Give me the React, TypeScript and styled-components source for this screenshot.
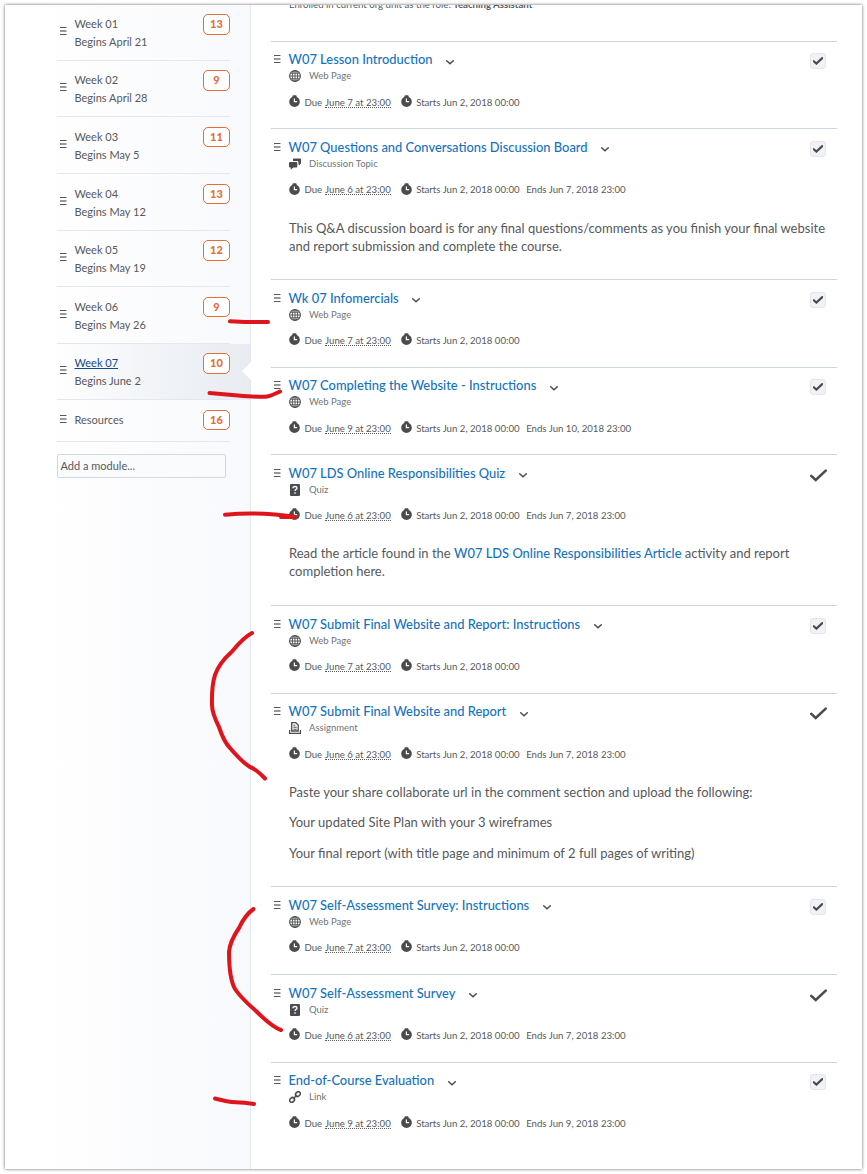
import React from "react";
import styled, { createGlobalStyle } from "styled-components";

const GlobalStyle = createGlobalStyle`
  * { box-sizing: border-box; }
  body {
    margin: 0;
    background: #fff;
    color: #56595b;
    font-family: Lato, "Liberation Sans", sans-serif;
  }
  p { margin: 0; }
`;

const Page = styled.div`
  position: relative;
  width: 867px;
  height: 1174px;
  padding: 5px;
  overflow: hidden;
`;

const Frame = styled.div`
  display: flex;
  width: 857px;
  height: 1164px;
  background: #fff;
  box-shadow: 0 0 3px rgba(0, 0, 0, 0.62);
  overflow: hidden;
`;

const Sidebar = styled.aside`
  width: 246px;
  flex: none;
  border-right: 1px solid #e3e9f1;
  background: linear-gradient(to right, #fff 35px, #f8f9fc 100%);
`;

const Module = styled.div<{ $height: number; $active?: boolean }>`
  position: relative;
  display: flex;
  align-items: flex-start;
  height: ${(p) => p.$height}px;
  padding: 10.1px 20px 0 52px;
  background: ${(p) =>
    p.$active ? "linear-gradient(to right, rgba(232,236,241,0) 52px, #e8ecf1 100%)" : "none"};
  &::after {
    content: "";
    position: absolute;
    left: 52px;
    right: 20px;
    bottom: 0;
    height: 1px;
    background: #e3e7ef;
  }
`;

const ModuleHandle = styled.span<{ $single?: boolean }>`
  display: flex;
  width: 17.5px;
  padding: ${(p) => (p.$single ? 4 : 12)}px 0 0 3px;
`;

const ModuleText = styled.div`
  flex: 1;
  font-size: 11px;
  line-height: 18px;
`;

const ModuleName = styled.div<{ $active?: boolean }>`
  color: ${(p) => (p.$active ? "#14498c" : "inherit")};
  text-decoration: ${(p) => (p.$active ? "underline" : "none")};
`;

const Count = styled.span`
  width: 27px;
  height: 20.5px;
  border: 1px solid #e06f38;
  border-radius: 5px;
  background: #fff;
  color: #e0703a;
  font-size: 11px;
  font-weight: 900;
  line-height: 18.5px;
  text-align: center;
  margin-top: -1px;
`;

const Notch = styled.span`
  position: absolute;
  right: -1px;
  top: 18px;
  border: solid transparent;
  border-width: 9.5px 9px 9.5px 0;
  border-right-color: #fff;
`;

const AddModule = styled.div`
  width: 169px;
  height: 24px;
  margin: 12px 0 0 52px;
  padding-left: 2.5px;
  border: 1px solid #d0d9e4;
  border-radius: 2px;
  background: #fafbfd;
  font-size: 11px;
  line-height: 21px;
`;

const Content = styled.main`
  flex: 1;
  padding: 0 25px 0 20px;
`;

const Notice = styled.div`
  height: 36px;
  padding-left: 18px;
  font-size: 9.63px;
  line-height: 12px;
  white-space: nowrap;
  overflow: hidden;
  span {
    display: block;
    margin-top: -7px;
  }
`;

const Topic = styled.section<{ $height: number }>`
  display: grid;
  grid-template-columns: 18px 1fr 27px;
  align-content: start;
  height: ${(p) => p.$height}px;
  border-top: 1px solid #cdd5e3;
`;

const TopicHandle = styled.span`
  display: flex;
  padding: 13.4px 0 0 2.5px;
`;

const TopicBody = styled.div`
  min-width: 0;
`;

const TitleRow = styled.div`
  display: flex;
  align-items: center;
  height: 18px;
  margin-top: 8.3px;
  white-space: nowrap;
`;

const TitleLink = styled.span`
  margin-left: -0.5px;
  color: #1573bd;
  font-size: 12.9px;
  font-weight: 500;
  line-height: 18px;
`;

const Chevron = styled.svg`
  margin: 6px 0 0 13.5px;
`;

const KindRow = styled.div`
  display: flex;
  align-items: center;
  height: 14px;
  margin-top: 1.2px;
  color: #727577;
  font-size: 9.5px;
  line-height: 14px;
  svg { margin-right: 8px; }
`;

const DateRow = styled.div`
  display: flex;
  align-items: center;
  height: 14px;
  margin-top: 11.1px;
  font-size: 9.64px;
  line-height: 14px;
  white-space: nowrap;
`;

const Clock = styled.svg`
  margin: -1px 4.4px 0 0;
`;

const DueDate = styled.span`
  margin: 0 10px 0 3px;
  height: 12px;
  line-height: 12px;
  border-bottom: 1px dotted #56595b;
`;

const EndDate = styled.span`
  margin-left: 6.6px;
`;

const Description = styled.div<{ $gap: number }>`
  display: flex;
  flex-direction: column;
  gap: ${(p) => p.$gap}px;
  margin-top: 22.5px;
  font-size: 13px;
  line-height: 18px;
  white-space: nowrap;
  a { color: #1573bd; font-size: 12.9px; font-weight: 500; }
`;

const CheckBox = styled.span`
  display: flex;
  align-items: center;
  justify-content: center;
  width: 16px;
  height: 16px;
  margin-top: 11.4px;
  padding-right: 1px;
  border: 1px solid #e1e5ec;
  border-radius: 3px;
  background: #f0f2f5;
`;

const DoneMark = styled.svg`
  margin: 13.3px 0 0 -0.5px;
`;

const Marks = styled.svg`
  position: absolute;
  left: 0;
  top: 0;
  pointer-events: none;
`;

const Handle = () => (
  <svg width="7" height="8" viewBox="0 0 7 8">
    <path d="M0 .5h6.500M0 7.500h6.500" stroke="#55585a" />
    <path d="M0 4h6.500" stroke="#97999b" strokeWidth="2" />
  </svg>
);

const ClockIcon = () => (
  <Clock width="11" height="12" viewBox="0 0 11 12">
    <path d="M3.4 1.2Q3.4.2 4.4.2h2.2q1 0 1 1v.5L9.5 3.2A5.3 5.3 0 1 1 1.5 3.2L3.4 1.7Z" fill="#494c4e" />
    <path d="M5.4 3.6v3.1h2.7" fill="none" stroke="#fff" strokeWidth="1.2" />
  </Clock>
);

type Kind = "Web Page" | "Discussion Topic" | "Quiz" | "Assignment" | "Link";

const KindIcon = ({ kind }: { kind: Kind }) => (
  <svg width="12" height="12" viewBox="0 0 12 12" fill="none" stroke="#494c4e">
    {kind === "Web Page" && (
      <>
        <circle cx="6" cy="6" r="5.4" strokeWidth="1.1" />
        <ellipse cx="6" cy="6" rx="2.7" ry="5.4" strokeWidth=".9" />
        <path d="M6 .6v10.8M.6 6h10.8M1.7 3.2h8.6M1.7 8.8h8.6" strokeWidth=".9" />
      </>
    )}
    {kind === "Discussion Topic" && (
      <g fill="#494c4e" stroke="none">
        <path d="M4.8.4h6.200q1 0 1 1v3.600q0 1-1 1v1.600L9.400 6.300V4.100q0-1.200-1.200-1.200H4V1.200q0-.8.8-.8Z" />
        <path d="M1 3.900h6.300q1 0 1 1v3.600q0 1-1 1H4.400L1.700 11.800V9.500H1q-1 0-1-1V4.900q0-1 1-1Z" />
      </g>
    )}
    {kind === "Quiz" && (
      <>
        <rect x="1" width="10" height="12" rx="1" fill="#494c4e" stroke="none" />
        <path d="M4 4.2V3.6Q4 2.5 6 2.5t2 1.4q0 .9-1 1.4t-1 1.7M6 8.3v1.4" stroke="#fff" strokeWidth="1.3" />
      </>
    )}
    {kind === "Assignment" && (
      <>
        <path d="M.6 8v3.4h10.8V8" strokeWidth="1.2" />
        <path d="M2.700 .6h4L9.200 3v6H2.700Z" strokeWidth="1.3" />
        <path d="M4.300 3.200h2M4.300 5.200h3.400M4.300 7.200h3.400" strokeWidth="1.100" />
      </>
    )}
    {kind === "Link" && (
      <g strokeWidth="1.5">
        <ellipse cx="3.100" cy="8.900" rx="2.600" ry="2.100" transform="rotate(-45 3.100 8.900)" />
        <ellipse cx="8.900" cy="3.100" rx="2.600" ry="2.100" transform="rotate(-45 8.900 3.100)" />
        <path d="M4 8 8 4" />
      </g>
    )}
  </svg>
);

const CHECK = "M1.2 6.3 5.4 10.2 14.8 1.4";

const modules = [
  { name: "Week 01", begins: "Begins April 21", count: 13, height: 56 },
  { name: "Week 02", begins: "Begins April 28", count: 9, height: 56.45 },
  { name: "Week 03", begins: "Begins May 5", count: 11, height: 57 },
  { name: "Week 04", begins: "Begins May 12", count: 13, height: 56.55 },
  { name: "Week 05", begins: "Begins May 19", count: 12, height: 56.45 },
  { name: "Week 06", begins: "Begins May 26", count: 9, height: 56.55 },
  { name: "Week 07", begins: "Begins June 2", count: 10, height: 56.45, active: true },
  { name: "Resources", count: 16, height: 41.55 },
];

interface TopicData {
  title: string;
  kind: Kind;
  due: string;
  ends?: string;
  height: number;
  done?: boolean;
  gap?: number;
  description?: React.ReactNode[];
}

const topics: TopicData[] = [
  { title: "W07 Lesson Introduction", kind: "Web Page", due: "June 7 at 23:00", height: 87.45 },
  {
    title: "W07 Questions and Conversations Discussion Board",
    kind: "Discussion Topic",
    due: "June 6 at 23:00",
    ends: "Jun 7, 2018 23:00",
    height: 150.95,
    description: [
      "This Q&A discussion board is for any final questions/comments as you finish your final website",
      "and report submission and complete the course.",
    ],
  },
  { title: "Wk 07 Infomercials", kind: "Web Page", due: "June 7 at 23:00", height: 87.6 },
  {
    title: "W07 Completing the Website - Instructions",
    kind: "Web Page",
    due: "June 9 at 23:00",
    ends: "Jun 10, 2018 23:00",
    height: 87.45,
  },
  {
    title: "W07 LDS Online Responsibilities Quiz",
    kind: "Quiz",
    due: "June 6 at 23:00",
    ends: "Jun 7, 2018 23:00",
    height: 150.95,
    done: true,
    description: [
      <>
        Read the article found in the <a>W07 LDS Online Responsibilities Article</a> activity and report
      </>,
      "completion here.",
    ],
  },
  {
    title: "W07 Submit Final Website and Report: Instructions",
    kind: "Web Page",
    due: "June 7 at 23:00",
    height: 87.6,
  },
  {
    title: "W07 Submit Final Website and Report",
    kind: "Assignment",
    due: "June 6 at 23:00",
    ends: "Jun 7, 2018 23:00",
    height: 193.4,
    done: true,
    gap: 12.3,
    description: [
      "Paste your share collaborate url in the comment section and upload the following:",
      "Your updated Site Plan with your 3 wireframes",
      "Your final report (with title page and minimum of 2 full pages of writing)",
    ],
  },
  {
    title: "W07 Self-Assessment Survey: Instructions",
    kind: "Web Page",
    due: "June 7 at 23:00",
    height: 88,
  },
  {
    title: "W07 Self-Assessment Survey",
    kind: "Quiz",
    due: "June 6 at 23:00",
    ends: "Jun 7, 2018 23:00",
    height: 87.6,
    done: true,
  },
  {
    title: "End-of-Course Evaluation",
    kind: "Link",
    due: "June 9 at 23:00",
    ends: "Jun 9, 2018 23:00",
    height: 88,
  },
];

export default function App() {
  return (
    <Page>
      <GlobalStyle />
      <Frame>
        <Sidebar>
          {modules.map((m) => (
            <Module key={m.name} $height={m.height} $active={m.active}>
              <ModuleHandle $single={!m.begins}>
                <Handle />
              </ModuleHandle>
              <ModuleText>
                <ModuleName $active={m.active}>{m.name}</ModuleName>
                {m.begins}
              </ModuleText>
              <Count>{m.count}</Count>
              {m.active && <Notch />}
            </Module>
          ))}
          <AddModule>Add a module...</AddModule>
        </Sidebar>
        <Content>
          <Notice>
            <span>
              Enrolled in current org unit as the role: <b>Teaching Assistant</b>
            </span>
          </Notice>
          {topics.map((t) => (
            <Topic key={t.title} $height={t.height}>
              <TopicHandle>
                <Handle />
              </TopicHandle>
              <TopicBody>
                <TitleRow>
                  <TitleLink>{t.title}</TitleLink>
                  <Chevron width="8" height="5" viewBox="0 0 8 5">
                    <path d="M.7.8 4 3.7 7.3.8" fill="none" stroke="#494c4e" strokeWidth="1.5" strokeLinecap="round" />
                  </Chevron>
                </TitleRow>
                <KindRow>
                  <KindIcon kind={t.kind} />
                  {t.kind}
                </KindRow>
                <DateRow>
                  <ClockIcon />
                  Due <DueDate>{t.due}</DueDate>
                  <ClockIcon />
                  Starts Jun 2, 2018 00:00
                  {t.ends && <EndDate>Ends {t.ends}</EndDate>}
                </DateRow>
                {t.description && (
                  <Description $gap={t.gap ?? 0}>
                    {t.description.map((line, i) => (
                      <p key={i}>{line}</p>
                    ))}
                  </Description>
                )}
              </TopicBody>
              {t.done ? (
                <DoneMark width="17" height="13" viewBox="0 0 16 12">
                  <path d={CHECK} fill="none" stroke="#494c4e" strokeWidth="2.4" strokeLinecap="round" />
                </DoneMark>
              ) : (
                <CheckBox>
                  <svg width="10" height="8" viewBox="0 0 16 12">
                    <path d={CHECK} fill="none" stroke="#494c4e" strokeWidth="3.4" strokeLinecap="round" />
                  </svg>
                </CheckBox>
              )}
            </Topic>
          ))}
        </Content>
      </Frame>
      <Marks
        width="867"
        height="1174"
        viewBox="0 0 867 1174"
        fill="none"
        stroke="#df151d"
        strokeWidth="4"
        strokeLinecap="round"
        strokeLinejoin="round"
      >
        <path d="M230 321.3 245 322 268 322" />
        <path d="M209.500 393 238 395.500Q262 397.500 267 396.500T280 391.500" />
        <path d="M225 514.700Q250 512.500 275 514.500L294 516.500M281 517h14" />
        <path d="M252 633Q244 637 232 651.500Q219 663 215 675Q211.500 686 212 705Q212 713 219 727Q224 742 230 748Q242 762 250 767Q256 769 265 778.500" />
        <path d="M253.500 909Q245 915 239 928Q230 941 229 952Q229 978 235 989Q241 998 256 1011Q272 1027 281 1030" />
        <path d="M215 1098.500Q228 1102 236 1102.300T254 1104" />
      </Marks>
    </Page>
  );
}
